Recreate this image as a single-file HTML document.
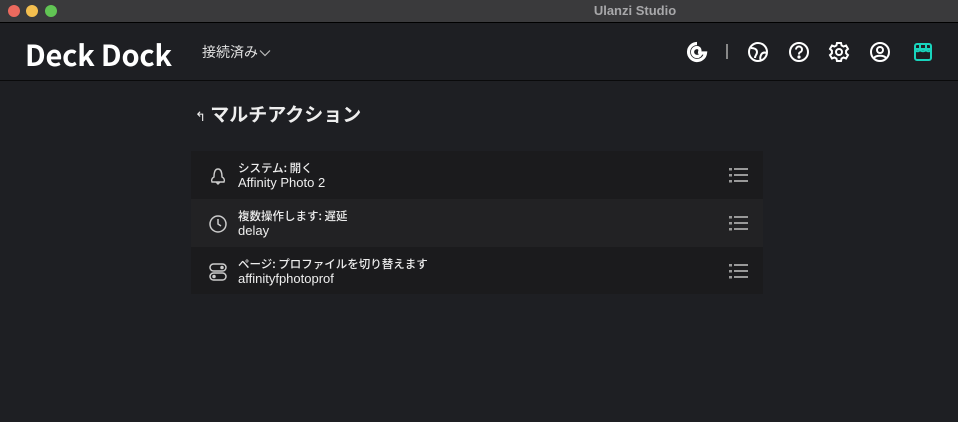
<!DOCTYPE html>
<html><head><meta charset="utf-8"><style>
*{margin:0;padding:0;box-sizing:border-box}
body{width:958px;height:422px;background:#1e1f23;font-family:"Liberation Sans","Noto Sans CJK JP",sans-serif;color:#fff;position:relative;overflow:hidden}
.tb{position:absolute;left:0;top:0;width:958px;height:23px;background:#3a3a3c;border-bottom:1px solid #000}
.dot{position:absolute;top:5px;width:12px;height:12px;border-radius:50%}
.tt{position:absolute;left:0;width:1270px;top:3px;text-align:center;font-size:13px;font-weight:bold;color:#a8a8aa}
.hd{position:absolute;top:24px;left:0;width:958px;height:57px;border-bottom:1px solid #0a0a0b}
.logo{position:absolute;left:25px;top:36px;font-size:29px;font-weight:bold;font-family:"Noto Sans CJK JP","Liberation Sans",sans-serif;letter-spacing:-0.2px;line-height:36px}
.conn{position:absolute;left:202px;top:42px;font-size:14px;color:#e0e0e0;font-family:"Noto Sans CJK JP",sans-serif}
.ic{position:absolute;top:41px}
.ttl{position:absolute;left:195px;top:100px;font-size:19px;font-weight:bold;font-family:"Noto Sans CJK JP",sans-serif;color:#eee}
.list{position:absolute;left:191px;top:151px;width:572px;height:143px;background:#1b1b1d}
.row{position:relative;height:48px}
.row.alt{background:#222224}
.t1{position:absolute;left:47px;top:9px;font-size:11.5px;font-weight:500;font-family:"Noto Sans CJK JP",sans-serif;color:#eee}
.t2{position:absolute;left:47px;top:24px;font-size:13px;color:#eee}
.menu{position:absolute;left:538px;top:17px}
.ri{position:absolute;left:17px;top:15px}
</style></head><body>
<div class="tb">
<div class="dot" style="left:8px;background:#ec6a5e"></div>
<div class="dot" style="left:26px;background:#f4bf4f"></div>
<div class="dot" style="left:45px;background:#61c554"></div>
<div class="tt">Ulanzi Studio</div>
</div>
<div class="hd"></div>
<div class="logo">Deck Dock</div>
<div class="conn">接続済み<svg width="12" height="8" viewBox="0 0 12 8" style="margin-left:1px"><path d="M1 1.5l5 5 5-5" stroke="#bbb" fill="none" stroke-width="1.2"/></svg></div>
<svg class="ic" style="left:686px" width="22" height="22" viewBox="0 0 22 22"><path d="M11 2.5a8.5 8.5 0 1 0 8.5 9.5h-4.5a4 4 0 0 1-4 3.5 4.5 4.5 0 0 1 0-9 3 3 0 0 1 3 3 1.8 1.8 0 0 1-2 1.8" stroke="#fff" stroke-width="3.2" fill="none"/></svg>
<div style="position:absolute;left:726px;top:44px;width:2px;height:15px;background:#888"></div>
<svg class="ic" style="left:747px" width="22" height="22" viewBox="0 0 22 22" fill="none" stroke="#fff" stroke-width="2"><circle cx="11" cy="11" r="9"/><path d="M4 7c3 0 6 1 6 4s-2 3-2 6M20 12c-3-1-5 0-6 2s-1 4 0 6"/></svg>
<svg class="ic" style="left:788px" width="22" height="22" viewBox="0 0 22 22" fill="none" stroke="#fff" stroke-width="2"><circle cx="11" cy="11" r="9"/><path d="M8 8.5a3 3 0 1 1 4 2.8c-1 .4-1 1-1 2.2"/><circle cx="11" cy="16" r=".6" fill="#fff"/></svg>
<svg class="ic" style="left:828px" width="22" height="22" viewBox="0 0 22 22" fill="none" stroke="#fff" stroke-width="2"><path d="M9 2h4l.6 2.5 2 1 2.4-1 2 3.4-1.9 1.8v2.6l1.9 1.8-2 3.4-2.4-1-2 1L13 20H9l-.6-2.5-2-1-2.4 1-2-3.4L3.9 12.3V9.7L2 7.9l2-3.4 2.4 1 2-1z"/><circle cx="11" cy="11" r="3"/></svg>
<svg class="ic" style="left:869px" width="22" height="22" viewBox="0 0 22 22" fill="none" stroke="#fff" stroke-width="2"><circle cx="11" cy="11" r="9"/><circle cx="11" cy="9" r="3"/><path d="M5 17c2-3 10-3 12 0"/></svg>
<svg class="ic" style="left:912px" width="22" height="22" viewBox="0 0 22 22" fill="none" stroke="#19d4bd" stroke-width="2"><rect x="3" y="3" width="16" height="16" rx="2"/><path d="M3 8h16M8 3v5M14 3v5M3 8c0 3 5 3 5 0 0 3 6 3 6 0 0 3 5 3 5 0"/></svg>
<div class="ttl"><span style="font-size:13px;font-weight:normal">↰</span> マルチアクション</div>
<div class="list">
<div class="row"><svg class="ri" width="20" height="20" viewBox="0 0 20 20" fill="none" stroke="#ccc" stroke-width="1.4"><path d="M10 3c-3 0-4 4-4 8-2 1-3 3-2 5h12c1-2 0-4-2-5 0-4-1-8-4-8zM8 16l2 2 2-2"/></svg><div class="t1">システム: 開く</div><div class="t2">Affinity Photo 2</div>
<svg class="menu" width="20" height="15" viewBox="0 0 20 15" fill="#999"><rect x="0" y="0" width="3" height="2.5"/><rect x="5" y="0" width="14" height="2"/><rect x="0" y="6" width="3" height="2.5"/><rect x="5" y="6" width="14" height="2"/><rect x="0" y="12" width="3" height="2.5"/><rect x="5" y="12" width="14" height="2"/></svg></div>
<div class="row alt"><svg class="ri" width="20" height="20" viewBox="0 0 20 20" fill="none" stroke="#ccc" stroke-width="1.5"><circle cx="10" cy="10" r="8"/><path d="M10 5v5l3 2"/></svg><div class="t1">複数操作します: 遅延</div><div class="t2">delay</div>
<svg class="menu" width="20" height="15" viewBox="0 0 20 15" fill="#999"><rect x="0" y="0" width="3" height="2.5"/><rect x="5" y="0" width="14" height="2"/><rect x="0" y="6" width="3" height="2.5"/><rect x="5" y="6" width="14" height="2"/><rect x="0" y="12" width="3" height="2.5"/><rect x="5" y="12" width="14" height="2"/></svg></div>
<div class="row"><svg class="ri" width="20" height="20" viewBox="0 0 20 20" fill="none" stroke="#ccc" stroke-width="1.5"><rect x="2" y="2" width="16" height="7" rx="3.5"/><rect x="2" y="11" width="16" height="7" rx="3.5"/><circle cx="14" cy="5.5" r="1" fill="#ccc"/><circle cx="6" cy="14.5" r="1" fill="#ccc"/></svg><div class="t1">ページ: プロファイルを切り替えます</div><div class="t2">affinityfphotoprof</div>
<svg class="menu" width="20" height="15" viewBox="0 0 20 15" fill="#999"><rect x="0" y="0" width="3" height="2.5"/><rect x="5" y="0" width="14" height="2"/><rect x="0" y="6" width="3" height="2.5"/><rect x="5" y="6" width="14" height="2"/><rect x="0" y="12" width="3" height="2.5"/><rect x="5" y="12" width="14" height="2"/></svg></div>
</div>
</body></html>
